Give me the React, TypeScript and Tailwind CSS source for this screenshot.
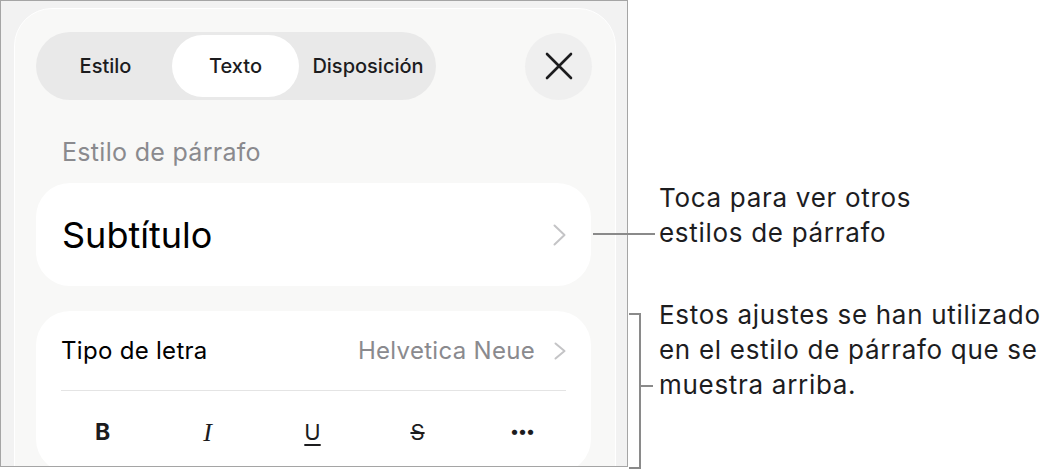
const sans = "font-['Inter','Noto_Sans',sans-serif]";

function CloseIcon() {
  return (
    <svg width="28" height="28" viewBox="0 0 28 28" fill="none">
      <path d="M2 2l24 24M26 2L2 26" stroke="#1c1c1e" strokeWidth="2.6" strokeLinecap="round" />
    </svg>
  );
}

function Chevron({ w, h }: { w: number; h: number }) {
  return (
    <svg width={w} height={h} viewBox={`0 0 ${w} ${h}`} fill="none">
      <path
        d={`M1.5 1.5L${w - 1.5} ${h / 2}L1.5 ${h - 1.5}`}
        stroke="#c4c4c6"
        strokeWidth="2"
        strokeLinecap="round"
        strokeLinejoin="round"
      />
    </svg>
  );
}

function Segmented() {
  return (
    <div className="flex h-[68px] w-[400px] items-center rounded-full bg-[#e9e9e9] p-[3px] text-[20px] font-medium text-[#1c1c1e]">
      <div className="flex h-full w-[133px] items-center justify-center">Estilo</div>
      <div className="flex h-full w-[127px] items-center justify-center rounded-full bg-white">Texto</div>
      <div className="flex h-full flex-1 items-center justify-center pl-[4px]">Disposición</div>
    </div>
  );
}

function FormatRow() {
  return (
    <div className="flex h-[82px] items-center pl-[14px] text-[#1c1c1e]">
      <div className="flex w-[105px] justify-center text-[23px] font-bold">B</div>
      <div className="flex w-[105px] justify-center font-['Liberation_Serif',serif] text-[26px] italic">I</div>
      <div className="flex w-[105px] justify-center text-[22px] underline decoration-[1.5px] underline-offset-[4px]">U</div>
      <div className="flex w-[105px] justify-center text-[22px] line-through decoration-[1.5px]">S</div>
      <div className="flex w-[105px] justify-center text-[17px] font-bold">•••</div>
    </div>
  );
}

function Panel() {
  return (
    <div className="ml-[13px] mt-[7px] h-[520px] w-[602px] rounded-[38px] border border-white bg-[#f8f8f7] pl-[21px] pr-[23px] pt-[23px]">
      <div className="flex items-center justify-between">
        <Segmented />
        <div className="flex h-[67px] w-[67px] items-center justify-center rounded-full bg-[#efefef]">
          <CloseIcon />
        </div>
      </div>

      <div className="mt-[37px] pl-[26px] text-[25px] leading-[30px] tracking-[0.3px] text-[#8a8a8e]">
        Estilo de párrafo
      </div>

      <div className="mr-[1px] mt-[16px] flex h-[103px] items-center justify-between rounded-[34px] bg-white pl-[26px] pr-[25px]">
        <span className="text-[36px] leading-[44px] text-black">Subtítulo</span>
        <Chevron w={13} h={22} />
      </div>

      <div className="mr-[1px] mt-[25px] rounded-[34px] bg-white">
        <div className="mx-[25px] flex h-[80px] items-center justify-between border-b border-[#e4e4e4]">
          <span className="text-[24px] tracking-[0.3px] text-black">Tipo de letra</span>
          <span className="flex items-center gap-[19px] text-[24px] tracking-[0.3px] text-[#8a8a8e]">
            Helvetica Neue
            <Chevron w={12} h={18} />
          </span>
        </div>
        <FormatRow />
      </div>
    </div>
  );
}

export default function App() {
  return (
    <div className={`relative flex h-[471px] w-[1064px] overflow-hidden bg-white ${sans}`}>
      <div className="h-[467px] w-[628px] shrink-0 overflow-hidden border border-[#a5a5a5] bg-[#f2f2f2]">
        <Panel />
      </div>

      <div className="ml-[31px] pt-[180px] text-[26px] leading-[35px] tracking-[0.7px] text-[#1d1d1f]">
        <p>
          Toca para ver otros
          <br />
          estilos de párrafo
        </p>
        <p className="mt-[47px]">
          Estos ajustes se han utilizado
          <br />
          en el estilo de párrafo que se
          <br />
          muestra arriba.
        </p>
      </div>

      {/* leader line to the paragraph style row */}
      <div className="absolute left-[593px] top-[233px] h-[2px] w-[62px] bg-[#8a8a8a]" />

      {/* bracket around the font settings */}
      <div className="absolute left-[629px] top-[313px] h-[156px] w-[12px] border-y-2 border-r-2 border-[#8a8a8a]" />
      <div className="absolute left-[641px] top-[385px] h-[2px] w-[12px] bg-[#8a8a8a]" />
    </div>
  );
}
